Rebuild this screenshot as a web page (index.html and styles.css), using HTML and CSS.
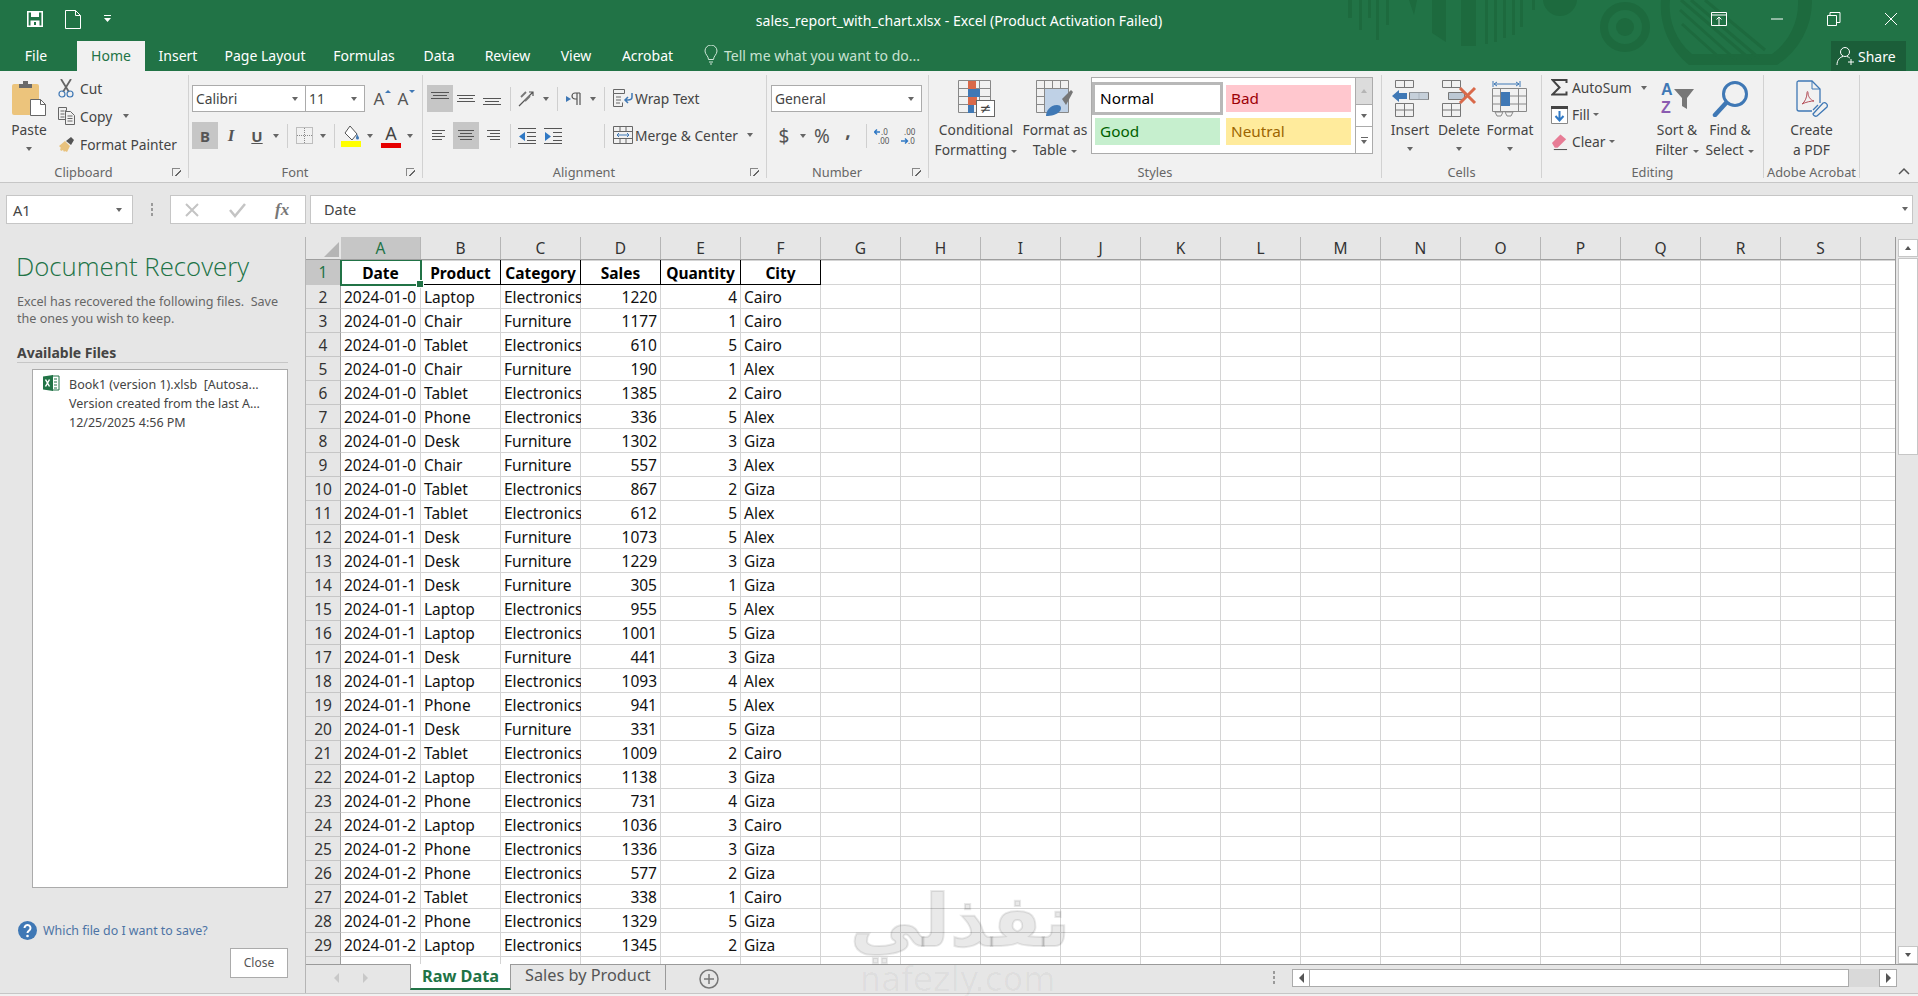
FILE: index.html
```html
<!DOCTYPE html>
<html lang="en">
<head>
<meta charset="utf-8">
<title>sales_report_with_chart.xlsx - Excel</title>
<link rel="stylesheet" href="styles.css">
</head>
<body>
<div class="app">

<header class="title">
  <svg class="deco" width="480" height="71" viewBox="1340 0 480 71">
    <g fill="#1d6a3e">
      <rect x="1348" y="0" width="4" height="18"/><rect x="1359" y="0" width="3" height="30"/><rect x="1368" y="0" width="3" height="18"/><rect x="1376" y="0" width="3" height="40"/><rect x="1386" y="0" width="3" height="25"/>
      <path d="M1409 0h8l-3 15z"/><path d="M1432 0h14v42l-14-9z"/><path d="M1461 0h15v46h-15z"/>
      <rect x="1485" y="0" width="3" height="44"/><rect x="1494" y="0" width="3" height="42"/><rect x="1503" y="0" width="3" height="38"/><rect x="1512" y="0" width="3" height="35"/><rect x="1520" y="0" width="3" height="27"/><rect x="1532" y="0" width="3" height="10"/>
      <circle cx="1560" cy="-1" r="17"/><circle cx="1625" cy="27" r="9"/>
    </g>
    <circle cx="1625" cy="27" r="21" fill="none" stroke="#1d6a3e" stroke-width="8"/>
    <path d="M1661 0a76 76 0 0 0 28 65h88a76 76 0 0 0 35-65h-14a62 62 0 0 1-26 54h-80a62 62 0 0 1-22-54z" fill="#1d6a3e"/>
    <path d="M1681 0l70 60M1691 0l68 58M1680 10l56 50M1682 24l40 36M1705 0l60 50" stroke="#1d6a3e" stroke-width="3" fill="none"/>
  </svg>
  <div class="topbar">
    <div class="qat">
      <svg width="16" height="16" viewBox="0 0 16 16"><path d="M.8.8h14.4v14.4H.8z" fill="none" stroke="#fff" stroke-width="1.6"/><path d="M4 1h8v5H4zM3.500 9.500h9V15h-9z" fill="#fff"/><path d="M7 11h2v3H7z" fill="#217346"/></svg>
      <svg class="qat-new" width="16" height="19" viewBox="0 0 16 19"><path d="M.5.500h10l5 5v13H.5z" fill="none" stroke="#fff"/><path d="M10.500.500v5h5" fill="none" stroke="#fff"/></svg>
      <svg class="qat-more" width="7" height="8" viewBox="0 0 7 8"><path d="M0 0h7v1H0zM0 3h7L3.500 7z" fill="#fff"/></svg>
    </div>
    <div class="doc-title">sales_report_with_chart.xlsx - Excel (Product Activation Failed)</div>
    <div class="winbtns">
      <svg width="16" height="14" viewBox="0 0 16 14"><path d="M.5.500h15v13H.5zM1 3h14M8 13V5M5.500 7.500L8 5l2.500 2.500" fill="none" stroke="#fff"/></svg>
      <svg width="14" height="14" viewBox="0 0 14 14"><path d="M1 7h12" stroke="#fff"/></svg>
      <svg width="14" height="14" viewBox="0 0 14 14"><path d="M.5 3.500h9v10h-9zM3 3.500V.500h10v10h-3.500" fill="none" stroke="#fff"/></svg>
      <svg width="14" height="14" viewBox="0 0 14 14"><path d="M1 1l12 12M13 1L1 13" stroke="#fff"/></svg>
    </div>
  </div>
  <nav class="tabs">
    <div class="tab">File</div>
    <div class="tab tab-on">Home</div>
    <div class="tab">Insert</div>
    <div class="tab">Page Layout</div>
    <div class="tab">Formulas</div>
    <div class="tab">Data</div>
    <div class="tab">Review</div>
    <div class="tab">View</div>
    <div class="tab">Acrobat</div>
    <div class="tell">
      <svg width="14" height="20" viewBox="0 0 14 20"><path d="M4.500 14.500C4.500 11 1 9.500 1 6a6 6 0 0 1 12 0c0 3.500-3.500 5-3.500 8.500zM5 17h4M6 19h2" fill="none" stroke="#cfe6d8"/></svg>
      <span>Tell me what you want to do...</span>
    </div>
    <div class="share">
      <svg width="20" height="20" viewBox="0 0 20 20"><circle cx="9" cy="6" r="4.500" fill="none" stroke="#fff"/><path d="M1 19c0-5 3-8 6-8.500M11 10.500c1 .3 2 .8 2.800 1.500M15 13v6M12 16h6" fill="none" stroke="#fff"/></svg>
      <span>Share</span>
    </div>
  </nav>
</header>

<section class="ribbon">

  <div class="grp g-clip">
    <div class="body">
      <div class="big w-paste">
        <svg width="36" height="37" viewBox="0 0 36 37"><rect x="1" y="4" width="27" height="31" rx="2" fill="#ecc47c"/><path d="M8 4h13v4H8zM12 1h5v3h-5z" fill="#6a6a6a"/><path d="M19.500 19.500h10l5 5v11h-15z" fill="#fff" stroke="#666"/><path d="M29.500 19.500v5h5" fill="none" stroke="#666"/></svg>
        <span class="bigt">Paste</span>
        <i class="caret solo"></i>
      </div>
      <div class="smalls">
        <div class="small"><svg width="17" height="19" viewBox="0 0 17 19"><path d="M3 0l8 13M13 0L5 13" stroke="#666" stroke-width="1.800" fill="none"/><circle cx="4" cy="15" r="3" fill="none" stroke="#3f78b5" stroke-width="1.200"/><circle cx="12" cy="15" r="3" fill="none" stroke="#3f78b5" stroke-width="1.200"/></svg><span>Cut</span></div>
        <div class="small"><svg width="17" height="18" viewBox="0 0 17 18"><path d="M.5.500h8v3h-1v9h-7zM7.500 4.500h5l4 4v9h-9zM9.500 9h5M9.500 11.500h5M9.500 14h5M2.500 4h4M2.500 7h4M2.500 10h4" fill="none" stroke="#666"/></svg><span>Copy</span><i class="caret cop"></i></div>
        <div class="small"><svg width="17" height="17" viewBox="0 0 17 17"><path d="M1 10l6-5 5 5-3 6-2-1-1 1-1-2-2 1-1-2 1-1z" fill="#e8c27e"/><path d="M8 5l5-4 3 3-3 5z" fill="#555"/></svg><span>Format Painter</span></div>
      </div>
    </div>
    <div class="foot"><span>Clipboard</span><i class="launch"></i></div>
  </div>

  <div class="grp g-font">
    <div class="body stack">
      <div class="line">
        <div class="combo w-fontname"><span>Calibri</span><i class="caret"></i></div>
        <div class="combo w-fontsize"><span>11</span><i class="caret"></i></div>
        <div class="ib w-grow"><span class="growa">A</span><i class="up-mark"></i></div>
        <div class="ib w-shrink"><span class="growa">A</span><i class="down-mark"></i></div>
      </div>
      <div class="line">
        <div class="ib on glyph bold">B</div>
        <div class="ib glyph ital">I</div>
        <div class="ib glyph uline">U</div>
        <div class="arr"><i class="caret"></i></div>
        <i class="sep"></i>
        <div class="ib"><svg width="17" height="17" viewBox="0 0 17 17"><path d="M.500.500h16v16H.5zM8.500 1v15M1 8.500h15" fill="none" stroke="#8a8a8a" stroke-dasharray="1 1"/></svg></div>
        <div class="arr"><i class="caret"></i></div>
        <i class="sep"></i>
        <div class="ib"><svg width="20" height="22" viewBox="0 0 20 22"><path d="M9 1l7 8-5 6-7-7z" fill="#fff" stroke="#555"/><path d="M16 9c1 2 2 3 2 4a1.500 1.500 0 0 1-3 0c0-1 .5-2 1-4z" fill="#3f78b5"/><rect x="0" y="16" width="20" height="6" fill="#ffff00"/></svg></div>
        <div class="arr"><i class="caret"></i></div>
        <div class="ib fcolor"><span class="fca">A</span><i class="redbar"></i></div>
        <div class="arr"><i class="caret"></i></div>
      </div>
    </div>
    <div class="foot"><span>Font</span><i class="launch"></i></div>
  </div>

  <div class="grp g-align">
    <div class="body stack">
      <div class="line">
        <div class="ib on"><svg width="18" height="15" viewBox="0 0 18 15"><path d="M0 1.500h18M2 4.500h14M0 7.500h18" stroke="#555"/></svg></div>
        <div class="ib"><svg width="18" height="15" viewBox="0 0 18 15"><path d="M0 4.500h18M2 7.500h14M0 10.500h18" stroke="#555"/></svg></div>
        <div class="ib"><svg width="18" height="15" viewBox="0 0 18 15"><path d="M0 7.500h18M2 10.500h14M0 13.500h18" stroke="#555"/></svg></div>
        <i class="sep"></i>
        <div class="ib"><svg width="19" height="19" viewBox="0 0 19 19"><path d="M1 17L15 3M11 3h4v4" fill="none" stroke="#555" stroke-width="1.200"/><path d="M3 8l5-5M7 12l5-5" stroke="#777" stroke-width="1.800"/></svg></div>
        <div class="arr"><i class="caret"></i></div>
        <i class="sep"></i>
        <div class="ib"><svg width="16" height="14" viewBox="0 0 16 14"><path d="M0 4l5 3-5 3z" fill="#3f78b5"/><path d="M11 1v12M14 1v12M14 1h-5a3 3 0 0 0 0 6h2" fill="none" stroke="#555" stroke-width="1.200"/></svg></div>
        <div class="arr"><i class="caret"></i></div>
        <i class="sep"></i>
        <div class="wide">
          <svg width="20" height="20" viewBox="0 0 20 20"><path d="M.500 1.500h11v4H.5zM.5 5.500v13h9v-4M3 9h5M3 12h5M3 15h4" fill="none" stroke="#666"/><path d="M19 5v4c0 2-2 3-4 3h-2M15 9l-3 3 3 3" fill="none" stroke="#3f78b5" stroke-width="1.500"/></svg>
          <span>Wrap Text</span>
        </div>
      </div>
      <div class="line">
        <div class="ib"><svg width="18" height="15" viewBox="0 0 18 15"><path d="M1 2.500h13M1 5.500h10M1 8.500h13M1 11.500h10" stroke="#555"/></svg></div>
        <div class="ib on"><svg width="18" height="15" viewBox="0 0 18 15"><path d="M1 2.500h16M3 5.500h12M1 8.500h16M3 11.500h12" stroke="#555"/></svg></div>
        <div class="ib"><svg width="18" height="15" viewBox="0 0 18 15"><path d="M4 2.500h13M7 5.500h10M4 8.500h13M7 11.500h10" stroke="#555"/></svg></div>
        <i class="sep"></i>
        <div class="ib"><svg width="18" height="18" viewBox="0 0 18 18"><path d="M0 1.500h18M9 5.500h9M9 9.500h9M9 13.500h9M0 16.500h18" stroke="#555"/><path d="M7 5v9L1 9.500z" fill="#2f78c4"/></svg></div>
        <div class="ib"><svg width="18" height="18" viewBox="0 0 18 18"><path d="M0 1.500h18M9 5.500h9M9 9.500h9M9 13.500h9M0 16.500h18" stroke="#555"/><path d="M1 5v9l6-4.500z" fill="#2f78c4"/></svg></div>
        <i class="sep sep-far"></i>
        <div class="wide">
          <svg width="20" height="20" viewBox="0 0 20 20"><path d="M.500 1.500h19v17H.5zM1 6.500h18M1 13.500h18M7 1v5M13 1v5M7 14v4M13 14v4" fill="none" stroke="#666"/><path d="M4 10h12M4 10l2-2M4 10l2 2M16 10l-2-2M16 10l-2 2" fill="none" stroke="#3f78b5"/></svg>
          <span>Merge &amp; Center</span>
          <i class="caret merge"></i>
        </div>
      </div>
    </div>
    <div class="foot"><span>Alignment</span><i class="launch"></i></div>
  </div>

  <div class="grp g-num">
    <div class="body stack">
      <div class="line">
        <div class="combo w-numfmt"><span>General</span><i class="caret"></i></div>
      </div>
      <div class="line">
        <div class="ib glyph big-g">$</div>
        <div class="arr"><i class="caret"></i></div>
        <div class="ib glyph big-g">%</div>
        <div class="ib glyph big-g comma">,</div>
        <i class="sep"></i>
        <div class="ib"><svg width="18" height="18" viewBox="0 0 18 18"><text class="svgnum" x="7" y="8">.0</text><text class="svgnum" x="4" y="17">.00</text><path d="M6 5H1M3 2.500L.5 5 3 7.500" stroke="#2f78c4" stroke-width="1.400" fill="none"/></svg></div>
        <div class="ib"><svg width="18" height="18" viewBox="0 0 18 18"><text class="svgnum" x="4" y="8">.00</text><text class="svgnum" x="8" y="17">.0</text><path d="M1 14h6M5 11.500L7.500 14 5 16.500" stroke="#2f78c4" stroke-width="1.400" fill="none"/></svg></div>
      </div>
    </div>
    <div class="foot"><span>Number</span><i class="launch"></i></div>
  </div>

  <div class="grp g-styles">
    <div class="body">
      <div class="big w-cf">
        <svg width="37" height="37" viewBox="0 0 37 37"><path d="M.500.500h32v32H.5zM.5 8.500h32M.5 16.500h32M.5 24.500h32M10.500 0v33M21.500 0v33" fill="none" stroke="#888"/><path d="M10 1h8v8h-8z" fill="#d9694a"/><path d="M10 9h12v8H10z" fill="#3f78b5"/><path d="M10 17h9v8h-9z" fill="#d9694a"/><path d="M10 25h6v8h-6z" fill="#3f78b5"/><rect x="18.500" y="20.500" width="18" height="16" fill="#fff" stroke="#666"/><text class="svgne" x="27.500" y="33" text-anchor="middle">≠</text></svg>
        <span class="bigt">Conditional</span>
        <span class="bigt">Formatting <i class="caret"></i></span>
      </div>
      <div class="big w-ft">
        <svg width="38" height="37" viewBox="0 0 38 37"><path d="M.500.500h32v32H.5zM.5 8.500h32M.5 16.500h32M.5 24.500h32M8.500 0v33M16.500 0v33M24.500 0v33" fill="none" stroke="#888"/><path d="M9 9h23v23H9z" fill="#bfd1e6"/><path d="M26 19l9-9 2 2-7 13z" fill="#777"/><path d="M10 36c0-5 4-11 11-11 4 0 5 3 3 6-3 4-9 5-14 5z" fill="#3f78b5"/></svg>
        <span class="bigt">Format as</span>
        <span class="bigt">Table <i class="caret"></i></span>
      </div>
      <div class="gallery">
        <div class="cellstyles">
          <div class="cs cs-normal">Normal</div>
          <div class="cs cs-bad">Bad</div>
          <div class="cs cs-good">Good</div>
          <div class="cs cs-neutral">Neutral</div>
        </div>
        <div class="galscroll">
          <div class="gs gs1"><i class="caret up"></i></div>
          <div class="gs gs2"><i class="caret"></i></div>
          <div class="gs gs3"><i class="bar-mark"></i><i class="caret"></i></div>
        </div>
      </div>
    </div>
    <div class="foot"><span>Styles</span></div>
  </div>

  <div class="grp g-cells">
    <div class="body">
      <div class="big w-ins">
        <svg width="37" height="37" viewBox="0 0 37 37"><path d="M3.500.500h18v7h-18zM12.500 1v6M3.500 23.500h18v13h-18zM3.500 30h18M12.500 24v12M17.500 12.500h19v7h-19zM27 13v6" fill="none" stroke="#777"/><path d="M18 12.500h18v7H18z" fill="#bcc8d4" opacity=".8"/><path d="M0 16l7-6v3h8v6H7v3z" fill="#3f78b5"/></svg>
        <span class="bigt">Insert</span><i class="caret solo"></i>
      </div>
      <div class="big w-del">
        <svg width="37" height="37" viewBox="0 0 37 37"><path d="M1.500.500h18v7h-18zM10.500 1v6M1.500 23.500h18v13h-18zM1.500 30h18M10.500 24v12" fill="none" stroke="#777"/><path d="M7.500 12.500h16v7h-16z" fill="#bcc8d4" stroke="#777"/><path d="M19 8l15 15M34 8L19 23" stroke="#d9694a" stroke-width="3"/></svg>
        <span class="bigt">Delete</span><i class="caret solo"></i>
      </div>
      <div class="big w-fmt">
        <svg width="36" height="37" viewBox="0 0 36 37"><path d="M1 1v6M28 1v6M2 4h25M2 4l3-2M2 4l3 2M27 4l-3-2M27 4l-3 2" fill="none" stroke="#3f78b5"/><path d="M.500 8.500h34v23H.5zM.5 16h34M.5 24h34M8.500 9v22M26.500 9v22" fill="none" stroke="#888"/><rect x="9" y="12" width="9" height="14" fill="#3f78b5"/><path d="M3 32h8l-2 4H5zM13 32h8l-2 4h-4z" fill="none" stroke="#888"/></svg>
        <span class="bigt">Format</span><i class="caret solo"></i>
      </div>
    </div>
    <div class="foot"><span>Cells</span></div>
  </div>

  <div class="grp g-edit">
    <div class="body">
      <div class="editcol">
        <div class="small es"><svg width="17" height="17" viewBox="0 0 17 17"><path d="M15.500 4V1H1.500l7 7.500-7 7h14v-3" fill="none" stroke="#444" stroke-width="2"/></svg><span>AutoSum</span><i class="caret aus"></i></div>
        <div class="small es"><svg width="17" height="18" viewBox="0 0 17 18"><path d="M.500.500h16v17H.5z" fill="#fff" stroke="#888"/><rect x="0" y="0" width="17" height="3" fill="#444"/><path d="M8.500 5v9M4.500 10l4 4.500 4-4.500" fill="none" stroke="#2f78c4" stroke-width="2"/></svg><span>Fill</span><i class="caret tight"></i></div>
        <div class="small es"><svg width="18" height="18" viewBox="0 0 18 18"><path d="M1 10l9-9 6 5-9 9H4z" fill="#e77c95"/><path d="M3 17h14" stroke="#444"/></svg><span>Clear</span><i class="caret tight"></i></div>
      </div>
      <div class="big w-sort">
        <svg width="37" height="37" viewBox="0 0 37 37"><text class="svgaz az-a" x="2" y="15">A</text><text class="svgaz az-z" x="2" y="33">Z</text><path d="M15 9h20l-7 9v11l-5-3v-8z" fill="#777"/></svg>
        <span class="bigt">Sort &amp;</span>
        <span class="bigt">Filter <i class="caret"></i></span>
      </div>
      <div class="big w-find">
        <svg width="37" height="37" viewBox="0 0 37 37"><circle cx="23" cy="14" r="11.500" fill="none" stroke="#3f78b5" stroke-width="3"/><path d="M14 23L3 35" stroke="#3f78b5" stroke-width="4.500" stroke-linecap="round"/></svg>
        <span class="bigt">Find &amp;</span>
        <span class="bigt">Select <i class="caret"></i></span>
      </div>
    </div>
    <div class="foot"><span>Editing</span></div>
  </div>

  <div class="grp g-acro">
    <div class="body">
      <div class="big w-acro">
        <svg width="32" height="37" viewBox="0 0 32 37"><path d="M2 1h14l8 8v14M2 1a2 2 0 0 0-1 2v26a2 2 0 0 0 2 2h13" fill="none" stroke="#3f78b5" stroke-width="1.300"/><path d="M16 1v8h8" fill="none" stroke="#3f78b5"/><path d="M6 24c3-2 5-7 5-11 0-2 1-2 1 0 0 3 2 7 6 8-3 0-8 1-12 3z" fill="none" stroke="#b5505a"/><path d="M17 34l10-11a3 3 0 0 1 4 4L21 36a3 3 0 0 1-4-2zM22 25l-5 5" fill="none" stroke="#3f78b5" stroke-width="1.300"/></svg>
        <span class="bigt">Create</span>
        <span class="bigt">a PDF</span>
      </div>
    </div>
    <div class="foot"><span>Adobe Acrobat</span></div>
  </div>

  <div class="collapse"><svg width="12" height="8" viewBox="0 0 12 8"><path d="M1 7l5-5 5 5" fill="none" stroke="#555" stroke-width="1.500"/></svg></div>
</section>

<section class="fbar">
  <div class="namebox"><span>A1</span><i class="caret"></i></div>
  <div class="fdots"><i></i><i></i><i></i></div>
  <div class="fbtns">
    <svg width="16" height="16" viewBox="0 0 16 16"><path d="M2 2l12 12M14 2L2 14" stroke="#c4c4c4" stroke-width="2"/></svg>
    <svg width="17" height="16" viewBox="0 0 17 16"><path d="M1 8l5 6L16 2" fill="none" stroke="#c4c4c4" stroke-width="2.500"/></svg>
    <span class="fx">fx</span>
  </div>
  <div class="finput">Date</div>
  <i class="caret fcaret"></i>
</section>

<main class="main">
  <aside class="pane">
    <h1 class="pane-h">Document Recovery</h1>
    <p class="pane-d">Excel has recovered the following files.&nbsp; Save<br>the ones you wish to keep.</p>
    <h2 class="pane-a">Available Files</h2>
    <div class="filebox">
      <svg width="17" height="16" viewBox="0 0 17 16"><path d="M9 1h7v14H9z" fill="#fff" stroke="#217346"/><path d="M11 4h3M11 7h3M11 10h3M11 13h3" stroke="#217346"/><path d="M0 1.500L10 0v16L0 14.500z" fill="#217346"/><path d="M2.500 4.500l4 7M6.500 4.500l-4 7" stroke="#fff" stroke-width="1.500"/></svg>
      <div class="fileinfo">
        <div>Book1 (version 1).xlsb&nbsp; [Autosa...</div>
        <div>Version created from the last A...</div>
        <div>12/25/2025 4:56 PM</div>
      </div>
    </div>
    <div class="help">
      <svg width="19" height="19" viewBox="0 0 19 19"><circle cx="9.500" cy="9.500" r="9.500" fill="#3f78b5"/><path d="M6.500 7a3 3 0 1 1 4.500 2.600c-1 .6-1.500 1-1.500 2.400" fill="none" stroke="#fff" stroke-width="2"/><circle cx="9.500" cy="15" r="1.300" fill="#fff"/></svg>
      <span>Which file do I want to save?</span>
    </div>
    <div class="closebtn">Close</div>
  </aside>

  <div class="work">
    <div class="sheetarea">
      <div class="grid">
        <div class="colhead">
          <div class="corner"><i></i></div>
          <div class="ch ch-on">A</div><div class="ch">B</div><div class="ch">C</div><div class="ch">D</div><div class="ch">E</div><div class="ch">F</div><div class="ch">G</div><div class="ch">H</div><div class="ch">I</div><div class="ch">J</div><div class="ch">K</div><div class="ch">L</div><div class="ch">M</div><div class="ch">N</div><div class="ch">O</div><div class="ch">P</div><div class="ch">Q</div><div class="ch">R</div><div class="ch">S</div>
        </div>
        <div class="rows">
          <div class="row row-h"><div class="rh rh-on">1</div><div class="c h sel">Date</div><div class="c h">Product</div><div class="c h">Category</div><div class="c h">Sales</div><div class="c h">Quantity</div><div class="c h">City</div></div>
          <div class="row"><div class="rh">2</div><div class="c">2024-01-0</div><div class="c">Laptop</div><div class="c">Electronics</div><div class="c n">1220</div><div class="c n">4</div><div class="c">Cairo</div></div>
          <div class="row"><div class="rh">3</div><div class="c">2024-01-0</div><div class="c">Chair</div><div class="c">Furniture</div><div class="c n">1177</div><div class="c n">1</div><div class="c">Cairo</div></div>
          <div class="row"><div class="rh">4</div><div class="c">2024-01-0</div><div class="c">Tablet</div><div class="c">Electronics</div><div class="c n">610</div><div class="c n">5</div><div class="c">Cairo</div></div>
          <div class="row"><div class="rh">5</div><div class="c">2024-01-0</div><div class="c">Chair</div><div class="c">Furniture</div><div class="c n">190</div><div class="c n">1</div><div class="c">Alex</div></div>
          <div class="row"><div class="rh">6</div><div class="c">2024-01-0</div><div class="c">Tablet</div><div class="c">Electronics</div><div class="c n">1385</div><div class="c n">2</div><div class="c">Cairo</div></div>
          <div class="row"><div class="rh">7</div><div class="c">2024-01-0</div><div class="c">Phone</div><div class="c">Electronics</div><div class="c n">336</div><div class="c n">5</div><div class="c">Alex</div></div>
          <div class="row"><div class="rh">8</div><div class="c">2024-01-0</div><div class="c">Desk</div><div class="c">Furniture</div><div class="c n">1302</div><div class="c n">3</div><div class="c">Giza</div></div>
          <div class="row"><div class="rh">9</div><div class="c">2024-01-0</div><div class="c">Chair</div><div class="c">Furniture</div><div class="c n">557</div><div class="c n">3</div><div class="c">Alex</div></div>
          <div class="row"><div class="rh">10</div><div class="c">2024-01-0</div><div class="c">Tablet</div><div class="c">Electronics</div><div class="c n">867</div><div class="c n">2</div><div class="c">Giza</div></div>
          <div class="row"><div class="rh">11</div><div class="c">2024-01-1</div><div class="c">Tablet</div><div class="c">Electronics</div><div class="c n">612</div><div class="c n">5</div><div class="c">Alex</div></div>
          <div class="row"><div class="rh">12</div><div class="c">2024-01-1</div><div class="c">Desk</div><div class="c">Furniture</div><div class="c n">1073</div><div class="c n">5</div><div class="c">Alex</div></div>
          <div class="row"><div class="rh">13</div><div class="c">2024-01-1</div><div class="c">Desk</div><div class="c">Furniture</div><div class="c n">1229</div><div class="c n">3</div><div class="c">Giza</div></div>
          <div class="row"><div class="rh">14</div><div class="c">2024-01-1</div><div class="c">Desk</div><div class="c">Furniture</div><div class="c n">305</div><div class="c n">1</div><div class="c">Giza</div></div>
          <div class="row"><div class="rh">15</div><div class="c">2024-01-1</div><div class="c">Laptop</div><div class="c">Electronics</div><div class="c n">955</div><div class="c n">5</div><div class="c">Alex</div></div>
          <div class="row"><div class="rh">16</div><div class="c">2024-01-1</div><div class="c">Laptop</div><div class="c">Electronics</div><div class="c n">1001</div><div class="c n">5</div><div class="c">Giza</div></div>
          <div class="row"><div class="rh">17</div><div class="c">2024-01-1</div><div class="c">Desk</div><div class="c">Furniture</div><div class="c n">441</div><div class="c n">3</div><div class="c">Giza</div></div>
          <div class="row"><div class="rh">18</div><div class="c">2024-01-1</div><div class="c">Laptop</div><div class="c">Electronics</div><div class="c n">1093</div><div class="c n">4</div><div class="c">Alex</div></div>
          <div class="row"><div class="rh">19</div><div class="c">2024-01-1</div><div class="c">Phone</div><div class="c">Electronics</div><div class="c n">941</div><div class="c n">5</div><div class="c">Alex</div></div>
          <div class="row"><div class="rh">20</div><div class="c">2024-01-1</div><div class="c">Desk</div><div class="c">Furniture</div><div class="c n">331</div><div class="c n">5</div><div class="c">Giza</div></div>
          <div class="row"><div class="rh">21</div><div class="c">2024-01-2</div><div class="c">Tablet</div><div class="c">Electronics</div><div class="c n">1009</div><div class="c n">2</div><div class="c">Cairo</div></div>
          <div class="row"><div class="rh">22</div><div class="c">2024-01-2</div><div class="c">Laptop</div><div class="c">Electronics</div><div class="c n">1138</div><div class="c n">3</div><div class="c">Giza</div></div>
          <div class="row"><div class="rh">23</div><div class="c">2024-01-2</div><div class="c">Phone</div><div class="c">Electronics</div><div class="c n">731</div><div class="c n">4</div><div class="c">Giza</div></div>
          <div class="row"><div class="rh">24</div><div class="c">2024-01-2</div><div class="c">Laptop</div><div class="c">Electronics</div><div class="c n">1036</div><div class="c n">3</div><div class="c">Cairo</div></div>
          <div class="row"><div class="rh">25</div><div class="c">2024-01-2</div><div class="c">Phone</div><div class="c">Electronics</div><div class="c n">1336</div><div class="c n">3</div><div class="c">Giza</div></div>
          <div class="row"><div class="rh">26</div><div class="c">2024-01-2</div><div class="c">Phone</div><div class="c">Electronics</div><div class="c n">577</div><div class="c n">2</div><div class="c">Giza</div></div>
          <div class="row"><div class="rh">27</div><div class="c">2024-01-2</div><div class="c">Tablet</div><div class="c">Electronics</div><div class="c n">338</div><div class="c n">1</div><div class="c">Cairo</div></div>
          <div class="row"><div class="rh">28</div><div class="c">2024-01-2</div><div class="c">Phone</div><div class="c">Electronics</div><div class="c n">1329</div><div class="c n">5</div><div class="c">Giza</div></div>
          <div class="row"><div class="rh">29</div><div class="c">2024-01-2</div><div class="c">Laptop</div><div class="c">Electronics</div><div class="c n">1345</div><div class="c n">2</div><div class="c">Giza</div></div>
          <div class="row"><div class="rh"></div></div>
        </div>
      </div>
      <div class="vscroll">
        <div class="sb-btn"><i class="caret up dark"></i></div>
        <div class="sb-thumb"></div>
        <div class="sb-track"></div>
        <div class="sb-btn"><i class="caret dark"></i></div>
      </div>
    </div>
    <div class="sheettabs">
      <div class="navarrows"><i class="tri-l"></i><i class="tri-r"></i></div>
      <div class="stab stab-on">Raw Data</div>
      <div class="stab">Sales by Product</div>
      <svg class="addsheet" width="20" height="20" viewBox="0 0 20 20"><circle cx="10" cy="10" r="9" fill="none" stroke="#777" stroke-width="1.500"/><path d="M10 5v10M5 10h10" stroke="#777" stroke-width="1.500"/></svg>
      <div class="vdots"><i></i><i></i><i></i></div>
      <div class="hscroll">
        <div class="hb"><i class="tri-l dark"></i></div>
        <div class="hthumb"></div>
        <div class="htrack"></div>
        <div class="hb"><i class="tri-r dark"></i></div>
      </div>
    </div>
  </div>
</main>
<footer class="status"></footer>

<div class="wm wm-ar" dir="rtl">نفذلي</div>
<div class="wm wm-en">nafezly.com</div>
</div>
</body>
</html>
```
FILE: styles.css
```css
* { box-sizing: border-box; }
html, body { margin: 0; padding: 0; }
body { width: 1918px; height: 996px; overflow: hidden; background: #e6e6e6; font-family: "Noto Sans", "Open Sans", sans-serif; color: #444; }
i { display: block; font-style: normal; }
h1, h2, p { margin: 0; font-weight: normal; }
svg { display: block; flex: none; }

.app { position: relative; width: 1918px; height: 996px; display: flex; flex-direction: column; overflow: hidden; }

/* title bar */
.title { position: relative; height: 71px; background: #217346; color: #fff; flex: none; overflow: hidden; }
.deco { position: absolute; left: 1340px; top: 0; }
.topbar { position: relative; height: 41px; display: grid; grid-template-columns: 1fr auto 1fr; align-items: center; }
.qat { display: flex; align-items: center; padding: 0 0 3px 27px; }
.qat-new { margin-left: 22px; }
.qat-more { margin-left: 23px; }
.doc-title { font-size: 14.100px; }
.winbtns { display: flex; justify-content: flex-end; align-items: center; gap: 43px; padding: 0 20px 3px 0; }
.tabs { position: relative; height: 30px; display: grid; grid-template-columns: 77px 68px 66px 108px 90px 60px 77px 60px 83px 1fr auto; font-size: 14px; }
.tab { display: flex; align-items: center; justify-content: center; padding-bottom: 2px; }
.tab:first-child { padding-right: 5px; }
.tab-on { background: #f1f1f1; color: #217346; }
.tell { display: flex; align-items: center; gap: 6px; padding: 0 0 2px 15px; color: #c8e2d2; }
.share { display: flex; align-items: center; gap: 2px; width: 75px; margin-right: 12px; padding-left: 5px; background: #1b5e39; }

/* ribbon */
.ribbon { height: 112px; background: #f1f1f1; border-bottom: 1px solid #c6c6c6; display: flex; flex: none; font-size: 13.800px; color: #444; }
.grp { height: 103px; margin-top: 4px; border-right: 1px solid #d2d2d2; display: flex; flex-direction: column; flex: none; }
.g-clip { width: 189px; }
.g-font { width: 234px; }
.g-align { width: 344px; }
.g-num { width: 162px; }
.g-styles { width: 453px; }
.g-cells { width: 160px; }
.g-edit { width: 222px; }
.g-acro { width: 96px; }
.body { height: 88px; display: flex; }
.foot { height: 15px; display: flex; align-items: center; justify-content: center; font-size: 12.800px; color: #666; padding-top: 3px; white-space: nowrap; }
.foot span { flex: 1; text-align: center; }
.launch { width: 21px; height: 9px; flex: none; background: linear-gradient(#888, #888) 5px 0 / 8px 1px no-repeat, linear-gradient(#888, #888) 5px 0 / 1px 8px no-repeat, linear-gradient(135deg, transparent 45%, #666 45%, #666 60%, transparent 60%) 8px 2px / 6px 6px no-repeat; }

.stack { flex-direction: column; gap: 10px; padding-top: 10px; }
.line { display: flex; height: 27px; align-items: center; }
.g-font .stack { padding-left: 3px; }
.g-align .stack, .g-num .stack { padding-left: 4px; }

.caret { width: 0; height: 0; border-left: 3.500px solid transparent; border-right: 3.500px solid transparent; border-top: 4px solid #666; flex: none; }
.caret.up { border-top: 0; border-bottom: 4px solid #b5b5b5; }
.big .bigt .caret { display: inline-block; vertical-align: middle; margin-left: 1px; border-left-width: 3px; border-right-width: 3px; border-top-width: 3px; }
.caret.solo { margin-top: 7px; }

.big { display: flex; flex-direction: column; align-items: center; padding-top: 5px; flex: none; }
.big svg { height: 37px; margin-bottom: 3px; }
.bigt { height: 20px; line-height: 20px; white-space: nowrap; }
.w-paste { width: 58px; }
.w-cf { width: 86px; margin-left: 4px; }
.w-ft { width: 72px; }
.w-ins { width: 50px; margin-left: 3px; }
.w-del { width: 48px; }
.w-fmt { width: 54px; }
.w-sort { width: 52px; }
.w-find { width: 54px; }
.w-acro { width: 95px; }

.smalls { display: flex; flex-direction: column; margin-top: -1px; }
.small { display: flex; align-items: center; height: 28px; width: 130px; white-space: nowrap; }
.small svg { width: 17px; margin-right: 5px; }
.caret.cop { margin-left: 11px; }

.combo { height: 27px; background: #fff; border: 1px solid #ababab; display: flex; align-items: center; justify-content: space-between; padding: 0 7px 0 3px; flex: none; }
.w-fontname { width: 114px; }
.w-fontsize { width: 60px; margin-left: -1px; }
.w-numfmt { width: 151px; }

.ib { width: 26px; height: 27px; display: flex; align-items: center; justify-content: center; position: relative; flex: none; }
.ib.on { background: #c6c6c6; }
.arr { width: 12px; height: 27px; display: flex; align-items: center; justify-content: center; flex: none; }
.sep { width: 1px; height: 24px; background: #cfcfcf; margin: 0 3px 0 5px; flex: none; }
.sep-far { margin-left: 38px; }
.glyph { font-size: 15px; color: #555; }
.bold { font-weight: 700; }
.ital { font-style: italic; font-weight: 700; font-family: "Liberation Serif", serif; font-size: 17px; }
.uline { text-decoration: underline; font-weight: 700; }
.big-g { font-size: 19px; }
.comma { font-weight: 700; padding-bottom: 11px; }
.w-grow { margin-left: 1px; }
.w-shrink { margin-left: -2px; }
.growa { font-size: 17px; color: #555; }
.up-mark, .down-mark { position: absolute; top: 5px; right: 1px; width: 0; height: 0; border-left: 3px solid transparent; border-right: 3px solid transparent; }
.up-mark { border-bottom: 3px solid #3f78b5; }
.down-mark { border-top: 3px solid #3f78b5; }
.fcolor { margin-left: 2px; flex-direction: column; }
.fca { font-size: 18px; line-height: 20px; color: #444; }
.redbar { width: 20px; height: 5px; background: #e60000; }
.wide { display: flex; align-items: center; padding: 0 0 1px 5px; white-space: nowrap; }
.wide svg { margin-right: 2px; }
.caret.merge { margin-left: 9px; }

.svgnum { font-size: 8px; font-family: "Noto Sans", sans-serif; fill: #555; }
.svgne { font-size: 14px; font-family: "DejaVu Sans", sans-serif; fill: #444; }
.svgaz { font-size: 16px; font-weight: 700; font-family: "Liberation Sans", sans-serif; }
.az-a { fill: #3f78b5; }
.az-z { fill: #8a5bb0; }

.gallery { width: 282px; height: 77px; margin: 2px 0 0 0; background: #fff; border: 1px solid #ababab; display: flex; flex: none; }
.cellstyles { display: grid; grid-template-columns: 125px 125px; grid-template-rows: 27px 27px; gap: 6px; padding: 7px 0 0 3px; }
.cs { padding-left: 5px; line-height: 27px; font-size: 15.300px; }
.cs-normal { outline: 3px solid #b8b8b8; color: #000; background: #fff; }
.cs-bad { background: #ffc7ce; color: #9c0006; }
.cs-good { background: #c6efce; color: #006100; }
.cs-neutral { background: #ffeb9c; color: #9c6500; }
.galscroll { margin-left: auto; width: 17px; display: flex; flex-direction: column; border-left: 1px solid #ababab; }
.gs { display: flex; flex-direction: column; align-items: center; justify-content: center; gap: 2px; }
.gs1 { height: 26px; background: #dcdcdc; }
.gs2 { height: 23px; border-top: 1px solid #ababab; border-bottom: 1px solid #ababab; }
.gs3 { flex: 1; }
.bar-mark { width: 7px; height: 1px; background: #666; }

.editcol { width: 100px; margin: -1px 0 0 9px; display: flex; flex-direction: column; flex: none; }
.es { height: 27px; width: auto; }
.es svg { margin-right: 4px; }
.caret.aus { margin-left: 9px; }
.caret.tight { margin-left: 3px; border-left-width: 3px; border-right-width: 3px; border-top-width: 3px; }
.collapse { flex: 1; display: flex; justify-content: flex-end; align-items: flex-end; padding: 0 8px 7px 0; }

/* formula bar */
.fbar { height: 54px; background: #e6e6e6; display: flex; padding: 12px 0 0 6px; flex: none; align-items: flex-start; position: relative; font-size: 14.500px; }
.namebox { width: 127px; height: 29px; background: #fff; border: 1px solid #c6c6c6; display: flex; align-items: center; justify-content: space-between; padding: 0 10px 0 6px; }
.fdots { width: 37px; height: 29px; display: flex; flex-direction: column; align-items: center; justify-content: center; gap: 2px; }
.fdots i, .vdots i { width: 2px; height: 3px; background: #9a9a9a; }
.fbtns { width: 136px; height: 29px; background: #fff; border: 1px solid #c6c6c6; display: flex; align-items: center; gap: 29px; padding-left: 13px; }
.fx { font-family: "Liberation Serif", serif; font-style: italic; font-weight: 700; font-size: 17px; color: #777; }
.finput { width: 1603px; height: 29px; margin-left: 4px; background: #fff; border: 1px solid #c6c6c6; padding-left: 13px; line-height: 27px; }
.fcaret { position: absolute; right: 10px; top: 24px; }

/* main */
.main { height: 756px; display: flex; flex: none; }
.pane { width: 306px; padding: 11px 17px 0 17px; background: #e6e6e6; border-right: 1px solid #b5b5b5; display: flex; flex-direction: column; flex: none; }
.pane-h { height: 36px; margin-left: -1px; line-height: 36px; font-family: "Open Sans", sans-serif; font-weight: 300; font-size: 25.800px; color: #217346; white-space: nowrap; }
.pane-d { margin-top: 9px; font-size: 12.600px; line-height: 17px; color: #666; white-space: nowrap; }
.pane-a { margin-top: 17px; height: 19px; line-height: 17px; font-size: 14px; font-weight: 700; color: #444; border-bottom: 1px solid #c6c6c6; }
.filebox { margin: 6px 0 0 15px; height: 519px; background: #fff; border: 1px solid #ababab; display: flex; gap: 9px; padding: 5px 0 0 10px; }
.fileinfo { font-size: 12.500px; line-height: 19px; white-space: nowrap; color: #444; }
.help { display: flex; align-items: center; gap: 6px; margin: 33px 0 0 0; font-size: 12.400px; color: #4d74a5; height: 18px; }
.help svg { margin-left: 1px; }
.closebtn { width: 58px; height: 30px; margin: 9px 0 0 auto; background: #fff; border: 1px solid #ababab; text-align: center; line-height: 28px; font-size: 12px; color: #555; }

.work { flex: 1; display: flex; flex-direction: column; min-width: 0; }
.sheetarea { height: 727px; display: flex; flex: none; }
.grid { width: 1590px; display: flex; flex-direction: column; background: #fff; border-right: 1px solid #9a9a9a; flex: none; overflow: hidden; }
.colhead { height: 23px; display: flex; background: #e6e6e6; border-bottom: 1px solid #9e9e9e; flex: none; }
.corner { width: 35px; flex: none; display: flex; justify-content: flex-end; align-items: flex-end; padding: 0 2px 2px 0; }
.corner i { width: 0; height: 0; border-left: 15px solid transparent; border-bottom: 15px solid #b5b5b5; }
.ch { width: 80px; flex: none; text-align: center; font-size: 15.500px; line-height: 22px; border-right: 1px solid #b5b5b5; color: #333; }
.ch-on { background: #c6c6c6; color: #217346; }
.rows { flex: 1; overflow: hidden; background-color: #fff; background-image: linear-gradient(#d4d4d4 1px, transparent 1px), linear-gradient(90deg, #d4d4d4 1px, transparent 1px); background-size: 100% 24px, 80px 100%; background-position: 0 24px, 34px 0; }
.row { height: 24px; display: flex; }
.row-h { height: 25px; }
.rh { width: 35px; flex: none; background: #e6e6e6; border-right: 1px solid #9e9e9e; border-bottom: 1px solid #c6c6c6; text-align: center; font-size: 15.500px; line-height: 24px; color: #333; }
.rh-on { background: #c6c6c6; color: #217346; line-height: 25px; }
.c { width: 80px; flex: none; padding: 0 4px 0 3px; overflow: hidden; white-space: nowrap; font-size: 15.500px; line-height: 24px; color: #111; }
.n { text-align: right; }
.h { padding: 0; text-align: center; font-weight: 700; color: #000; border-right: 1px solid #000; border-bottom: 1px solid #000; line-height: 27px; }
.sel { position: relative; overflow: visible; outline: 2px solid #217346; outline-offset: -1px; z-index: 1; }
.sel::after { content: ""; position: absolute; right: -4px; bottom: -4px; width: 6px; height: 6px; background: #217346; border: 1px solid #fff; }

.vscroll { width: 20px; margin-left: 2px; padding-top: 2px; display: flex; flex-direction: column; background: #e6e6e6; flex: none; }
.sb-btn { height: 18px; background: #fff; border: 1px solid #c6c6c6; display: flex; align-items: center; justify-content: center; flex: none; }
.caret.dark { border-top-color: #555; border-bottom-color: #555; }
.sb-thumb { height: 197px; margin-top: 1px; background: #fff; border: 1px solid #c6c6c6; flex: none; }
.sb-track { flex: 1; }

.sheettabs { height: 26px; display: flex; background: #e6e6e6; border-top: 1px solid #9a9a9a; flex: none; }
.navarrows { width: 104px; display: flex; align-items: center; gap: 24px; padding-left: 28px; }
.tri-l, .tri-r { width: 0; height: 0; border-top: 5px solid transparent; border-bottom: 5px solid transparent; }
.tri-l { border-right: 5px solid #c8c8c8; }
.tri-r { border-left: 5px solid #c8c8c8; }
.tri-l.dark { border-right-color: #555; }
.tri-r.dark { border-left-color: #555; }
.stab { height: 25px; padding: 0 0 0 14px; border-right: 1px solid #9a9a9a; line-height: 21px; font-size: 16.300px; color: #555; white-space: nowrap; flex: none; width: 155px; }
.stab-on { width: 101px; height: 26px; margin-top: -1px; padding: 0; text-align: center; line-height: 24px; background: #fff; color: #217346; font-weight: 700; border-left: 1px solid #9a9a9a; border-bottom: 2px solid #217346; }
.addsheet { margin: 4px 0 0 33px; }
.vdots { width: 3px; margin-left: 553px; display: flex; flex-direction: column; gap: 2px; align-items: center; justify-content: center; }
.hscroll { width: 605px; height: 18px; margin: 4px 0 0 17px; display: flex; flex: none; }
.hb { width: 18px; background: #fff; border: 1px solid #ababab; display: flex; align-items: center; justify-content: center; flex: none; }
.hthumb { width: 539px; background: #fff; border: 1px solid #ababab; border-left: 0; flex: none; }
.htrack { width: 30px; background: #d9d9d9; flex: none; }

.status { height: 3px; flex: 1; background: #f1f1f1; border-top: 1px solid #c6c6c6; }

/* watermark */
.wm { position: absolute; pointer-events: none; white-space: nowrap; }
.wm-ar { left: 850px; top: 881px; font-family: "DejaVu Sans", sans-serif; font-weight: 700; font-size: 72px; line-height: 80px; color: rgba(0, 0, 0, 0.085); -webkit-text-stroke: 2px rgba(0, 0, 0, 0.085); }
.wm-en { left: 860px; top: 964px; font-family: "DejaVu Sans", sans-serif; font-size: 33px; line-height: 32px; color: rgba(0, 0, 0, 0.035); }
```
